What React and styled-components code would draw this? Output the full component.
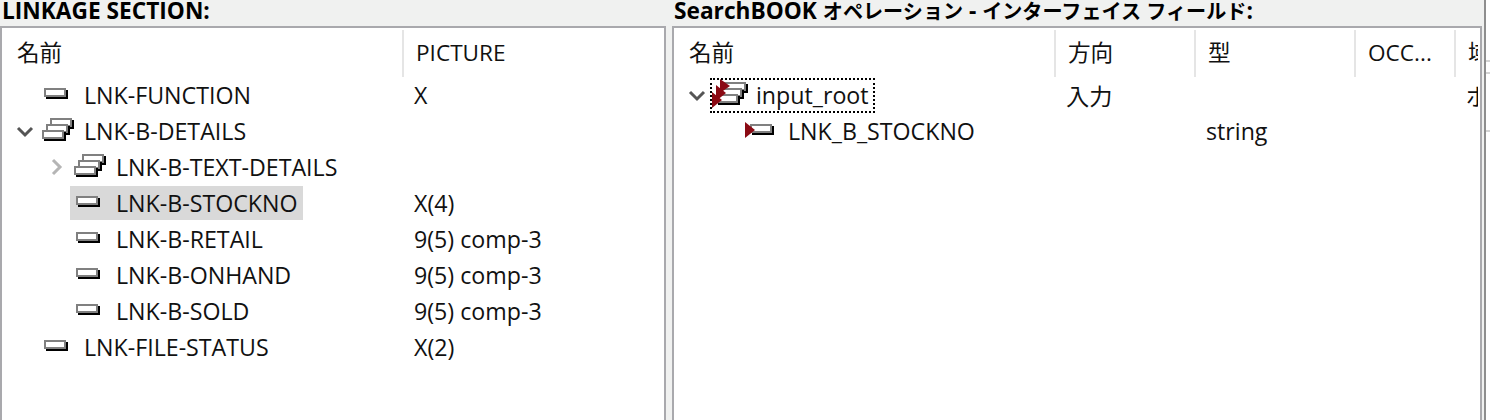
import React from "react";
import styled, { createGlobalStyle } from "styled-components";

const Global = createGlobalStyle`
  html, body { margin: 0; padding: 0; background: #fff; }
  body { width: 1490px; height: 420px; overflow: hidden; }
`;

const Page = styled.div`
  display: grid;
  grid-template-columns: 672px 812px 6px;
  width: 1490px;
  height: 420px;
  font-family: "Open Sans", "Noto Sans CJK JP", sans-serif;
  color: #111;
`;
const Section = styled.section`
  display: flex;
  flex-direction: column;
  min-width: 0;
  height: 420px;
  background: #f0f1f0;
`;
const Title = styled.h2`
  margin: 0;
  height: 26px;
  padding-left: 2px;
  font-size: 22.7px;
  line-height: 22px;
  font-weight: 700;
  color: #000;
  white-space: nowrap;
`;
const Cjk = styled.span`
  font-size: 20.1px;
`;
const Panel = styled.div`
  flex: 1;
  margin-right: ${(p) => p.$mr}px;
  background: #fff;
  border: 2px solid #a9a9ad;
  border-bottom: 0;
  overflow: hidden;
`;
const Header = styled.div`
  display: flex;
  height: 49px;
  padding-top: 2px;
  box-sizing: border-box;
`;
const HeadCell = styled.div`
  flex: 0 0 ${(p) => p.$w}px;
  height: 47px;
  box-sizing: border-box;
  padding-left: ${(p) => p.$pad ?? 12}px;
  border-right: 2px solid ${(p) => (p.$last ? "transparent" : "#e5e5e5")};
  font-size: 22.6px;
  line-height: 46px;
  overflow: hidden;
  white-space: nowrap;
`;
const Row = styled.div`
  display: flex;
  height: 36px;
  align-items: center;
  font-size: 23.2px;
  white-space: nowrap;
`;
const NameCell = styled.div`
  flex: 0 0 ${(p) => p.$w}px;
  display: flex;
  align-items: center;
  height: 36px;
  padding-left: ${(p) => p.$indent}px;
  box-sizing: border-box;
`;
const Twisty = styled.svg`
  flex: 0 0 18px;
  width: 18px;
  height: 18px;
  margin-right: 10px;
`;
const Item = styled.div`
  display: flex;
  align-items: center;
  height: ${(p) => (p.$focus ? 35 : 34)}px;
  padding: 0 ${(p) => (p.$sel || p.$focus ? 6 : 0)}px;
  margin-left: ${(p) => (p.$sel || p.$focus ? -6 : 0)}px;
  background: ${(p) => (p.$sel ? "#d9d9d9" : "transparent")};
  outline: ${(p) => (p.$focus ? "2px dotted #000" : "none")};
  outline-offset: -2px;
`;
const IconBox = styled.svg`
  flex: 0 0 26px;
  width: 26px;
  height: 24px;
  margin-right: 14px;
  overflow: visible;
  shape-rendering: crispEdges;
`;
const ValueCell = styled.div`
  flex: 0 0 ${(p) => p.$w}px;
  padding-left: 12px;
  box-sizing: border-box;
  overflow: hidden;
`;
const Rail = styled.div`
  display: flex;
  flex-direction: column;
  height: 420px;
  box-sizing: border-box;
  border-left: 2px solid #8e8e8e;
  background: #fff;
`;
const Tick = styled.div`
  height: 2px;
  margin-top: ${(p) => p.$gap}px;
  background: #d4d4d4;
`;

const Chevron = ({ open, light }) => (
  <Twisty viewBox="0 0 18 18">
    {open ? (
      <path d="M2 6 L9 13 L16 6" fill="none" stroke="#555" strokeWidth="3" />
    ) : (
      <path d="M5 2 L12 9 L5 16" fill="none" stroke={light ? "#b5b5b5" : "#555"} strokeWidth="3" />
    )}
  </Twisty>
);

const Bar = ({ x, y, w = 22, h = 9 }) => (
  <g>
    <rect x={x + 2} y={y + 2} width={w} height={h} fill="#000" />
    <rect x={x} y={y} width={w} height={h} fill="#808080" />
    <rect x={x + 2} y={y + 2} width={w - 4} height={h - 4} fill="#fff" />
  </g>
);
const Single = () => (
  <IconBox viewBox="0 0 26 24">
    <Bar x={0} y={5} />
  </IconBox>
);
const GroupBars = ({ dx = 0 }) => (
  <>
    <Bar x={6 + dx} y={-1} />
    <Bar x={2 + dx} y={5} />
    <Bar x={-2 + dx} y={11} />
  </>
);
const Group = () => (
  <IconBox viewBox="0 0 26 24">
    <GroupBars />
  </IconBox>
);
const Arrow = ({ x, y, s = 8 }) => (
  <path d={`M${x} ${y - s} L${x + 10} ${y} L${x} ${y + s} Z`} fill="#8b0a14" shapeRendering="auto" />
);
const GroupIn = () => (
  <IconBox viewBox="0 0 26 24">
    <GroupBars dx={2} />
    <Arrow x={4} y={3} s={7} />
    <Arrow x={0} y={10} />
    <Arrow x={-4} y={17} />
  </IconBox>
);
const SingleIn = () => (
  <IconBox viewBox="0 0 26 24">
    <Bar x={2} y={5} />
    <Arrow x={-3} y={11} />
  </IconBox>
);

const leftRows = [
  { n: "LNK-FUNCTION", v: "X", indent: 42, icon: <Single /> },
  { n: "LNK-B-DETAILS", v: "", indent: 14, tw: "open", icon: <Group /> },
  { n: "LNK-B-TEXT-DETAILS", v: "", indent: 46, tw: "closed", icon: <Group /> },
  { n: "LNK-B-STOCKNO", v: "X(4)", indent: 74, icon: <Single />, sel: true },
  { n: "LNK-B-RETAIL", v: "9(5) comp-3", indent: 74, icon: <Single /> },
  { n: "LNK-B-ONHAND", v: "9(5) comp-3", indent: 74, icon: <Single /> },
  { n: "LNK-B-SOLD", v: "9(5) comp-3", indent: 74, icon: <Single /> },
  { n: "LNK-FILE-STATUS", v: "X(2)", indent: 42, icon: <Single /> },
];

export default function App() {
  return (
    <Page>
      <Global />
      <Section>
        <Title>LINKAGE SECTION:</Title>
        <Panel $mr={6}>
          <Header>
            <HeadCell $w={402} $pad={15}>名前</HeadCell>
            <HeadCell $w={258} $last>PICTURE</HeadCell>
          </Header>
          {leftRows.map((r) => (
            <Row key={r.n}>
              <NameCell $w={400} $indent={r.indent}>
                {r.tw === "open" && <Chevron open />}
                {r.tw === "closed" && <Chevron light />}
                <Item $sel={r.sel}>
                  {r.icon}
                  {r.n}
                </Item>
              </NameCell>
              <ValueCell $w={258}>{r.v}</ValueCell>
            </Row>
          ))}
        </Panel>
      </Section>
      <Section>
        <Title>
          SearchBOOK <Cjk>オペレーション</Cjk> - <Cjk>インターフェイス フィールド</Cjk>:
        </Title>
        <Panel $mr={2}>
          <Header>
            <HeadCell $w={382} $pad={15}>名前</HeadCell>
            <HeadCell $w={140}>方向</HeadCell>
            <HeadCell $w={160}>型</HeadCell>
            <HeadCell $w={100}>OCC...</HeadCell>
            <HeadCell $w={24} $last>域</HeadCell>
          </Header>
          <Row>
            <NameCell $w={380} $indent={14}>
              <Chevron open />
              <Item $focus>
                <GroupIn />
                input_root
              </Item>
            </NameCell>
            <ValueCell $w={140}>入力</ValueCell>
            <ValueCell $w={160} />
            <ValueCell $w={100} />
            <ValueCell $w={24}>ポ</ValueCell>
          </Row>
          <Row>
            <NameCell $w={380} $indent={74}>
              <Item>
                <SingleIn />
                LNK_B_STOCKNO
              </Item>
            </NameCell>
            <ValueCell $w={140} />
            <ValueCell $w={160}>string</ValueCell>
          </Row>
        </Panel>
      </Section>
      <Rail>
        <Tick $gap={60} />
        <Tick $gap={10} />
        <Tick $gap={56} />
      </Rail>
    </Page>
  );
}
